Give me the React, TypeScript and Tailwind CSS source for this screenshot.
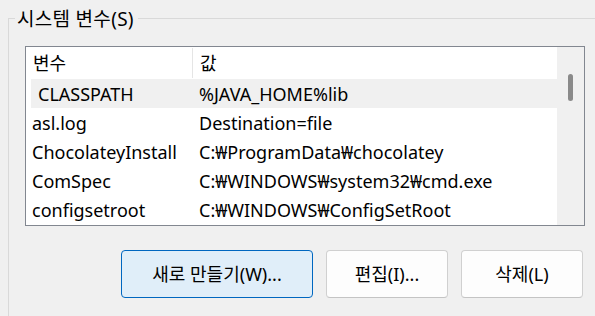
import React from "react";

const rows: { name: string; value: string; selected?: boolean }[] = [
  { name: "CLASSPATH", value: "%JAVA_HOME%lib", selected: true },
  { name: "asl.log", value: "Destination=file" },
  { name: "ChocolateyInstall", value: "C:₩ProgramData₩chocolatey" },
  { name: "ComSpec", value: "C:₩WINDOWS₩system32₩cmd.exe" },
  { name: "configsetroot", value: "C:₩WINDOWS₩ConfigSetRoot" },
];

export default function App() {
  return (
    <div
      className="w-[595px] h-[316px] overflow-hidden bg-[#f0f0f0] text-[18px] text-black pl-[8px] pt-[18px]"
      style={{ fontFamily: '"Noto Sans", "Noto Sans CJK KR", sans-serif' }}
    >
      <div className="relative w-[700px] h-[400px] border-l border-t border-[#d9d9d9] pl-[16px] pt-[27px]">
        <span className="absolute left-[6px] top-[-12px] bg-[#f0f0f0] pl-[2px] pr-[4px] leading-[24px] text-[19px] tracking-[0.3px]">
          시스템 변수(S)
        </span>

        <div className="flex w-[560px] h-[180px] border border-[#828790] bg-white">
          <div className="flex flex-col w-[531px] overflow-hidden">
            <div className="flex h-[32px] shrink-0 items-center leading-[32px]">
              <div className="w-[166px] pl-[7px]">변수</div>
              <div className="w-px h-[30px] bg-[#e5e5e5]" />
              <div className="pl-[7px]">값</div>
            </div>
            {rows.map((r) => (
              <div
                key={r.name}
                className={`flex h-[29px] shrink-0 ml-[5px] leading-[29px] pt-[1px] ${
                  r.selected ? "bg-[#f0f0f0]" : ""
                }`}
              >
                <div className={`w-[168px] ${r.selected ? "pl-[7px]" : "pl-[1px]"}`}>{r.name}</div>
                <div className="whitespace-nowrap">{r.value}</div>
              </div>
            ))}
          </div>
          <div className="flex w-[27px] justify-center bg-[#f0f0f0] pt-[27px]">
            <div className="w-[5px] h-[27px] rounded-full bg-[#8a8a8a]" />
          </div>
        </div>

        <div className="flex gap-[13px] pl-[96px] pt-[24px]">
          <button className="w-[192px] h-[48px] rounded-[4px] border border-[#0067c0] bg-[#e0eef9] text-[18px]">
            새로 만들기(W)...
          </button>
          <button className="w-[122px] h-[48px] rounded-[4px] border border-[#d0d0d0] border-b-[#c4c4c4] bg-[#fdfdfd] text-[18px]">
            편집(I)...
          </button>
          <button className="w-[122px] h-[48px] rounded-[4px] border border-[#d0d0d0] border-b-[#c4c4c4] bg-[#fdfdfd] text-[18px]">
            삭제(L)
          </button>
        </div>
      </div>
    </div>
  );
}
